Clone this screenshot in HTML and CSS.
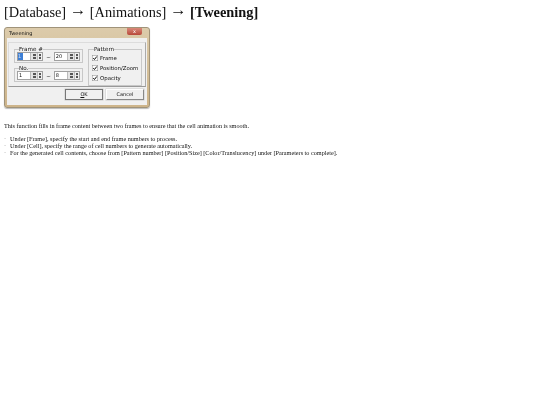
FILE: index.html
```html
<!DOCTYPE html>
<html lang="en">
<head>
    <meta charset="UTF-8">
    <meta name="viewport" content="width=device-width, initial-scale=1.0">
    <title>Tweening</title>
    <link rel="stylesheet" href="styles.css">
</head>
<body>
    <h1>[Database] <span class="arrow">→</span> [Animations] <span class="arrow">→</span> <b>[Tweening]</b></h1>

    <!-- Dialog screenshot -->
    <div class="dialog">
        <div class="title-bar">
            <span class="title">Tweening</span>
            <span class="close">x</span>
        </div>
        <div class="client">
            <div class="panel">
                <div class="left-col">
                    <fieldset class="group">
                        <legend>Frame #</legend>
                        <div class="range">
                            <div class="spin"><span class="value selected">1</span><span class="arrows"><i></i></span><span class="arrows small"><i></i></span></div>
                            <span class="tilde">~</span>
                            <div class="spin"><span class="value">20</span><span class="arrows"><i></i></span><span class="arrows small"><i></i></span></div>
                        </div>
                    </fieldset>
                    <fieldset class="group">
                        <legend>No.</legend>
                        <div class="range">
                            <div class="spin"><span class="value">1</span><span class="arrows"><i></i></span><span class="arrows small"><i></i></span></div>
                            <span class="tilde">~</span>
                            <div class="spin"><span class="value">8</span><span class="arrows"><i></i></span><span class="arrows small"><i></i></span></div>
                        </div>
                    </fieldset>
                </div>
                <fieldset class="group pattern">
                    <legend>Pattern</legend>
                    <div class="check"><svg class="box" viewBox="0 0 12 12"><rect x="0.5" y="0.5" width="11" height="11"/><path d="M2.5 6l2.5 3 4.5-6"/></svg>Frame</div>
                    <div class="check"><svg class="box" viewBox="0 0 12 12"><rect x="0.5" y="0.5" width="11" height="11"/><path d="M2.5 6l2.5 3 4.5-6"/></svg>Position/Zoom</div>
                    <div class="check"><svg class="box" viewBox="0 0 12 12"><rect x="0.5" y="0.5" width="11" height="11"/><path d="M2.5 6l2.5 3 4.5-6"/></svg>Opacity</div>
                </fieldset>
            </div>
            <div class="buttons">
                <div class="btn ok"><u>O</u>K</div>
                <div class="btn">Cancel</div>
            </div>
        </div>
    </div>

    <p class="intro">This function fills in frame content between two frames to ensure that the cell animation is smooth.</p>
    <ul class="notes">
        <li>Under [Frame], specify the start and end frame numbers to process.</li>
        <li>Under [Cell], specify the range of cell numbers to generate automatically.</li>
        <li>For the generated cell contents, choose from [Pattern number] [Position/Size] [Color/Translucency] under [Parameters to complete].</li>
    </ul>
</body>
</html>
```

FILE: styles.css
```css
body {
    margin: 0;
    padding: 2px 4px 0;
    background-color: #fff;
    font-family: "Liberation Serif", serif;
    color: #111;
    filter: blur(0.25px);
}

h1 {
    margin: 0;
    font-size: 14.35px;
    line-height: 18px;
    font-weight: normal;
    white-space: nowrap;
}

.arrow {
    font-size: 16.5px;
    line-height: 1;
    vertical-align: 1.5px;
}

/* Dialog */
.dialog {
    width: 146px;
    height: 81px;
    margin-top: 6px;
    box-sizing: border-box;
    padding: 0 2px 2px;
    background: linear-gradient(to bottom, #dccbab, #cdb48a);
    border: 1px solid #a09379;
    border-radius: 3px;
    box-shadow: 0 1px 1px #bbb;
    font-family: "DejaVu Sans", sans-serif;
    font-size: 5px;
    color: #111;
}

.title-bar {
    height: 10px;
    display: flex;
    align-items: flex-start;
    justify-content: space-between;
}

.title {
    margin: 2px 0 0 2px;
    font-size: 5px;
    line-height: 7px;
}

.close {
    width: 15px;
    height: 7px;
    margin-right: 5px;
    background: linear-gradient(to bottom, #d98a7a, #b8483a);
    border-radius: 0 0 2px 2px;
    color: #fff;
    text-align: center;
    font-size: 5px;
    line-height: 6px;
}

.client {
    height: 67px;
    box-sizing: border-box;
    padding: 4px 1px 0;
    background-color: #f0f0f0;
}

.panel {
    height: 45px;
    box-sizing: border-box;
    padding: 4px 3px 0 5px;
    display: flex;
    gap: 5px;
    border: 1px solid #dcdcdc;
    border-right-color: #aaa;
    border-bottom-color: #999;
}

.left-col {
    width: 69px;
    display: flex;
    flex-direction: column;
    gap: 3px;
}

.group {
    margin: 0;
    padding: 0 2px;
    border: 1px solid #c8c8c8;
    min-width: 0;
}

.group legend {
    padding: 0;
    margin-left: 2px;
    font-size: 5.6px;
    line-height: 5px;
}

.range {
    display: flex;
    align-items: center;
    gap: 3px;
    height: 10px;
}

.spin {
    flex: 1;
    height: 9px;
    display: flex;
    background: #fff;
    border: 1px solid #a0a0a0;
    box-sizing: border-box;
}

.value {
    flex: 1;
    font-size: 5px;
    line-height: 7px;
    padding-left: 1px;
}

.value.selected {
    flex: none;
    width: 5px;
    background: #3d7fd6;
    color: #cfe0f5;
    padding-left: 0;
    margin-right: auto;
}

.arrows {
    width: 6px;
    display: flex;
    align-items: center;
    justify-content: center;
    background: #e4e4e4;
    border-left: 1px solid #bbb;
}

.arrows.small {
    width: 4px;
    background: #f0f0f0;
}

.arrows i {
    width: 3px;
    height: 5px;
    background: linear-gradient(to bottom, #555 0, #555 40%, #ddd 40%, #ddd 60%, #555 60%, #555 100%);
}

.arrows.small i {
    width: 2px;
}

.tilde {
    font-size: 5.5px;
}

.pattern {
    flex: 1;
    padding: 1px 3px 0;
}

.check {
    display: flex;
    align-items: center;
    gap: 2px;
    height: 10px;
    font-size: 5.4px;
    white-space: nowrap;
}

.box {
    width: 6px;
    height: 6px;
    flex: none;
}

.box rect {
    fill: #fff;
    stroke: #888;
}

.box path {
    fill: none;
    stroke: #111;
    stroke-width: 2;
}

.buttons {
    display: flex;
    justify-content: flex-end;
    gap: 3px;
    margin: 2px 2px 0 0;
}

.btn {
    width: 38px;
    height: 11px;
    box-sizing: border-box;
    text-align: center;
    font-size: 5px;
    line-height: 9px;
    background: #f0f0f0;
    border: 1px solid;
    border-color: #fff #888 #888 #fff;
    box-shadow: 0 0 0 0.5px #ccc;
}

.ok {
    border-color: #777;
}

/* Description */
.intro {
    margin: 14px 0 0;
    font-size: 6.18px;
    line-height: 7px;
}

.notes {
    margin: 6px 0 0;
    padding: 0;
    list-style: none;
    font-size: 6.2px;
    line-height: 7px;
}

.notes li {
    padding-left: 6px;
    position: relative;
    white-space: nowrap;
}

.notes li:before {
    content: '·';
    position: absolute;
    left: 0;
    color: #777;
}
```
